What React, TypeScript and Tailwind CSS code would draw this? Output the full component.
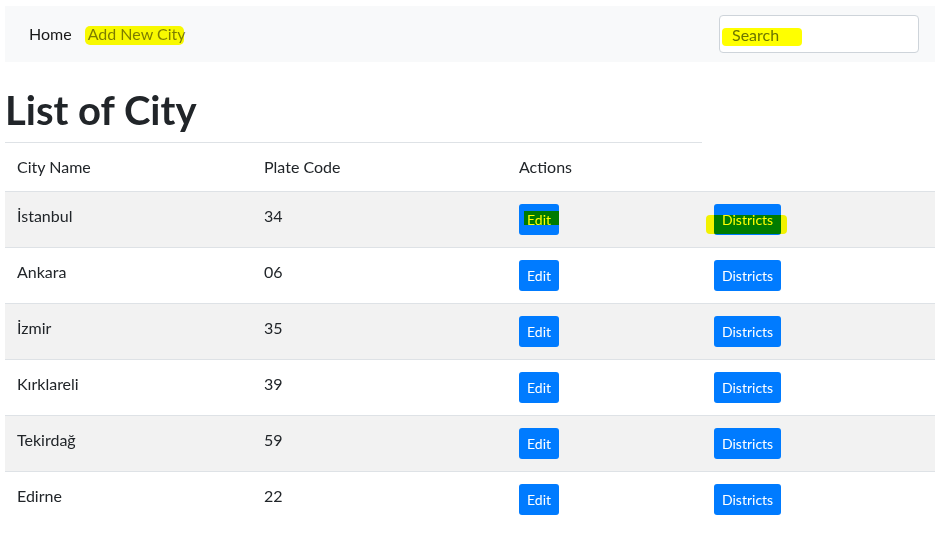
import React from "react";

const cities = [
  { name: "İstanbul", code: "34" },
  { name: "Ankara", code: "06" },
  { name: "İzmir", code: "35" },
  { name: "Kırklareli", code: "39" },
  { name: "Tekirdağ", code: "59" },
  { name: "Edirne", code: "22" },
];

// highlighter strokes drawn over the screenshot
function Marker({ className }: { className: string }) {
  return <div className={`pointer-events-none absolute bg-[#ffff00] mix-blend-multiply ${className}`} />;
}

function Btn({ children }: { children: React.ReactNode }) {
  return (
    <button className="h-[31px] rounded-[3px] bg-[#007bff] px-2 text-sm leading-[21px] text-white">
      {children}
    </button>
  );
}

export default function App() {
  return (
    <div className="relative h-[556px] w-[952px] overflow-hidden bg-white font-['Lato','Segoe_UI',sans-serif] text-[#212529]">
      <div className="w-[935px] pl-[5px] pt-[6px]">
        <nav className="flex h-14 items-center bg-[#f8f9fa] px-4">
          <a className="px-2 py-2 text-base text-black/90">Home</a>
          <a className="px-2 py-2 text-base text-black/50">Add New City</a>
          <input
            placeholder="Search"
            className="ml-auto h-[38px] w-[200px] rounded border border-[#ced4da] bg-white px-3 text-base placeholder:text-[#6c757d]"
          />
        </nav>

        <h1 className="mt-6 mb-2 text-[40px] leading-[48px] font-bold">List of City</h1>

        <table className="w-[930px] table-fixed border-collapse text-base">
          <colgroup>
            <col className="w-[247px]" />
            <col className="w-[255px]" />
            <col className="w-[195px]" />
            <col className="w-[233px]" />
          </colgroup>
          <thead>
            <tr>
              <th className="border-t border-[#dee2e6] p-3 text-left font-normal">City Name</th>
              <th className="border-t border-[#dee2e6] p-3 text-left font-normal">Plate Code</th>
              <th className="border-t border-[#dee2e6] p-3 text-left font-normal">Actions</th>
              <th />
            </tr>
          </thead>
          <tbody>
            {cities.map((c, i) => (
              <tr key={c.code} className={`border-t border-[#dee2e6] ${i % 2 === 0 ? "bg-[#f2f2f2]" : ""}`}>
                <td className="p-3 align-top">{c.name}</td>
                <td className="p-3 align-top">{c.code}</td>
                <td className="p-3 align-top">
                  <Btn>Edit</Btn>
                </td>
                <td className="p-3 align-top">
                  <Btn>Districts</Btn>
                </td>
              </tr>
            ))}
          </tbody>
        </table>
      </div>

      <Marker className="left-[85px] top-[26px] h-[19px] w-[99px] rounded-[5px]" />
      <Marker className="left-[722px] top-[28px] h-[18px] w-[80px] rounded-sm" />
      <Marker className="left-[524px] top-[211px] h-[14px] w-[35px]" />
      <Marker className="left-[706px] top-[215px] h-[19px] w-[81px] rounded-sm" />
    </div>
  );
}
